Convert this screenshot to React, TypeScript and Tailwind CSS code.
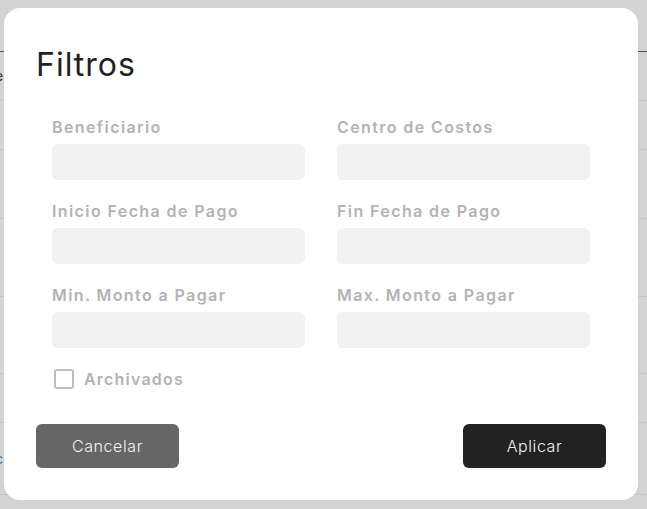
import { useState } from "react";

const rows = [
  { h: "h-[49px]", frag: "e", color: "text-[#333]" },
  { h: "h-[49px]", frag: "/", color: "text-[#2f6db5]" },
  { h: "h-[69px]", frag: "/", color: "text-[#9a6a2a]" },
  { h: "h-[78px]", frag: "/", color: "text-[#555]" },
  { h: "h-[77px]", frag: "/", color: "text-[#2f6db5]" },
  { h: "h-[49px]", frag: "/", color: "text-[#555]" },
  { h: "h-[72px]", frag: "c", color: "text-[#2f6db5]" },
];

const fields = [
  ["Beneficiario", "Centro de Costos"],
  ["Inicio Fecha de Pago", "Fin Fecha de Pago"],
  ["Min. Monto a Pagar", "Max. Monto a Pagar"],
];

function Field({ label }: { label: string }) {
  return (
    <div className="flex flex-col">
      <label className="h-6 text-base font-semibold leading-6 tracking-[1.4px] text-[#b3b3b3]">{label}</label>
      <input className="mt-[5px] h-9 w-full rounded-md bg-[#f2f2f2] px-3 text-sm text-gray-700 outline-none" />
    </div>
  );
}

export default function App() {
  const [archived, setArchived] = useState(false);

  return (
    <div className="relative h-[509px] w-[647px] overflow-hidden bg-[#d3d3d3] font-['Inter',sans-serif]">
      {/* table behind the overlay */}
      <div className="h-[52px] border-b border-[#555]" />
      {rows.map((r, i) => (
        <div key={i} className={`flex items-center border-b border-[#c4c4c4] ${r.h}`}>
          <span className={`-ml-[5px] text-sm ${r.color}`}>{r.frag}</span>
        </div>
      ))}

      {/* modal */}
      <div className="absolute left-[4px] top-[8px] w-[634px] rounded-2xl bg-white p-8">
        <h2 className="pt-[7px] text-[32px] font-normal leading-9 tracking-[1px] text-[#222]">Filtros</h2>

        <div className="mt-[32px] px-4">
          <div className="flex flex-col gap-[19px]">
            {fields.map(([a, b]) => (
              <div key={a} className="grid grid-cols-2 gap-8">
                <Field label={a} />
                <Field label={b} />
              </div>
            ))}
            <label className="flex h-6 items-center gap-[10px] pl-[2px]">
              <input type="checkbox" checked={archived} onChange={(e) => setArchived(e.target.checked)} className="peer sr-only" />
              <span className="h-5 w-5 rounded-[3px] border-2 border-[#bdbdbd]" />
              <span className="text-base font-semibold leading-6 tracking-[1.2px] text-[#b3b3b3]">Archivados</span>
            </label>
          </div>
        </div>

        <div className="mt-[33px] flex items-center justify-between">
          <button className="h-11 w-[143px] rounded-md bg-[#666666] text-base font-light text-[#f2f2f2] tracking-[0.6px]">Cancelar</button>
          <button className="h-11 w-[143px] rounded-md bg-[#222222] text-base font-light text-[#f2f2f2] tracking-[0.6px]">Aplicar</button>
        </div>
      </div>
    </div>
  );
}
